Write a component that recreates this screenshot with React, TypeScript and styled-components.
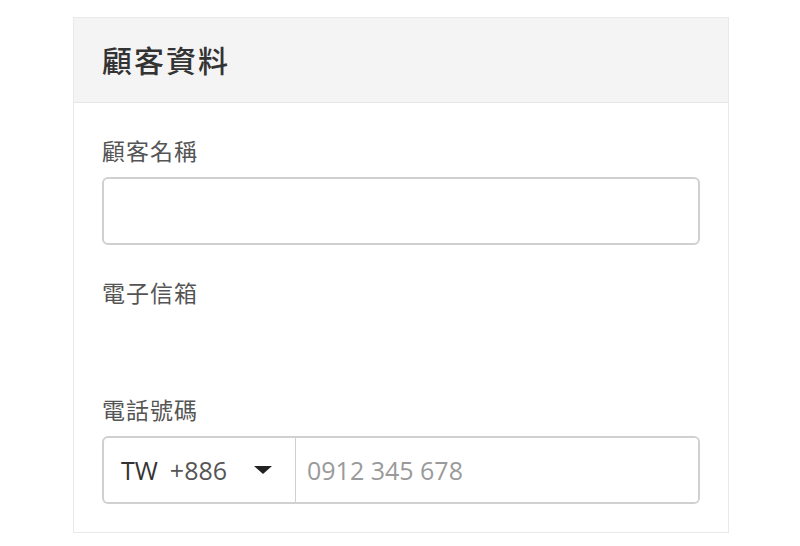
import styled, { createGlobalStyle } from 'styled-components';

const GlobalStyle = createGlobalStyle`
	html, body {
		margin: 0;
		padding: 0;
		background: #ffffff;
	}
	body {
		font-family: 'Noto Sans', 'Noto Sans CJK TC', sans-serif;
	}
`;

export default function App() {
	return (
		<Page>
			<GlobalStyle />
			<Card>
				<CardHeader>
					<CardTitle>顧客資料</CardTitle>
				</CardHeader>
				<CardBody>
					<Field>
						<Label>顧客名稱</Label>
						<TextInput type="text" />
					</Field>
					<Field>
						<Label>電子信箱</Label>
						<EmptySlot />
					</Field>
					<Field>
						<Label>電話號碼</Label>
						<PhoneGroup>
							<CountrySelect>
								<Country>TW</Country>
								<DialCode>+886</DialCode>
								<Caret />
							</CountrySelect>
							<PhoneInput type="tel" placeholder="0912 345 678" />
						</PhoneGroup>
					</Field>
				</CardBody>
			</Card>
		</Page>
	);
}

const Page = styled.div`
	padding: 17px 0 0 73px;
`;

const Card = styled.section`
	width: 656px;
	box-sizing: border-box;
	border: 1px solid #e9e9e9;
	background: #ffffff;
`;

const CardHeader = styled.header`
	height: 85px;
	box-sizing: border-box;
	display: flex;
	align-items: center;
	padding: 0 28px 2px;
	background: #f4f4f4;
	border-bottom: 1px solid #e6e6e6;
`;

const CardTitle = styled.h2`
	margin: 0;
	font-family: 'Noto Sans CJK TC', sans-serif;
	font-size: 30px;
	font-weight: 500;
	color: #333333;
	letter-spacing: 2px;
`;

const CardBody = styled.div`
	padding: 31px 28px 28px;
	display: flex;
	flex-direction: column;
	gap: 31px;
`;

const Field = styled.div`
	display: flex;
	flex-direction: column;
	gap: 10px;
`;

const Label = styled.label`
	font-family: 'Noto Sans CJK TC', sans-serif;
	font-size: 23px;
	line-height: 33px;
	color: #555555;
	letter-spacing: 1px;
`;

const EmptySlot = styled.div`
	height: 43px;
`;

const TextInput = styled.input`
	height: 68px;
	box-sizing: border-box;
	border: 2px solid #d0d0d0;
	border-radius: 6px;
	padding: 0 16px;
	font-size: 24px;
	outline: none;
`;

const PhoneGroup = styled.div`
	display: flex;
	height: 68px;
	box-sizing: border-box;
	border: 2px solid #d0d0d0;
	border-radius: 6px;
	overflow: hidden;
`;

const CountrySelect = styled.div`
	width: 192px;
	box-sizing: border-box;
	display: flex;
	align-items: center;
	padding: 0 0 0 17px;
	border-right: 1px solid #d0d0d0;
	font-family: 'Open Sans', sans-serif;
	font-size: 25px;
	color: #333333;
`;

const Country = styled.span`
	margin-right: 12px;
`;

const DialCode = styled.span`
	color: #555555;
`;

const Caret = styled.span`
	margin-left: 27px;
	width: 0;
	height: 0;
	border-left: 9px solid transparent;
	border-right: 9px solid transparent;
	border-top: 8px solid #222222;
`;

const PhoneInput = styled.input`
	flex: 1;
	min-width: 0;
	border: none;
	outline: none;
	padding: 0 11px;
	font-family: 'Open Sans', sans-serif;
	font-size: 25px;
	color: #333333;

	&::placeholder {
		color: #9a9a9a;
	}
`;
